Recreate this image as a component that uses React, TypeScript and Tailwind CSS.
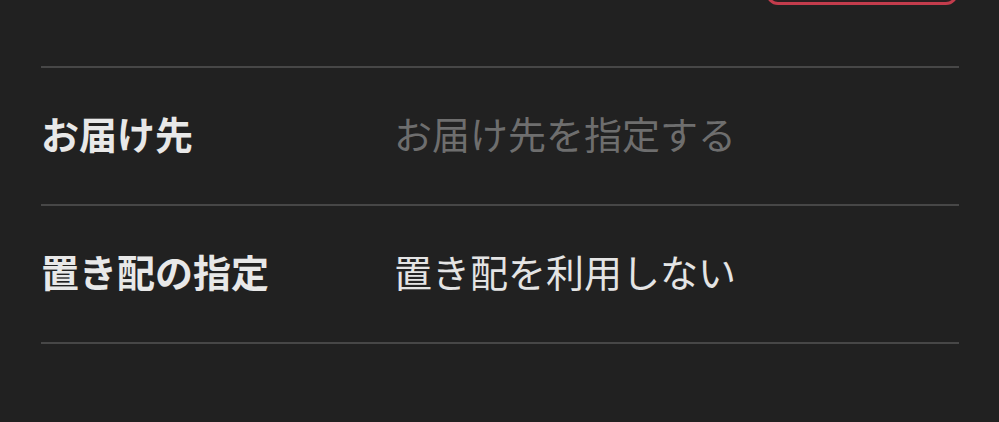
export default function App() {
  const rows = [
    { label: "お届け先", value: "お届け先を指定する", placeholder: true },
    { label: "置き配の指定", value: "置き配を利用しない", placeholder: false },
  ];

  return (
    <div
      className="w-full h-[422px] bg-[#212121] pl-[41px] pr-[40px] overflow-hidden"
      style={{ fontFamily: '"Noto Sans CJK JP", "Noto Sans", sans-serif' }}
    >
      {/* header with action button (cut off at top) */}
      <div className="h-[66px] flex justify-end items-start">
        <button className="mt-[-51px] mr-[1px] w-[192px] h-[56px] rounded-[12px] border-[3px] border-[#c33c4c] bg-[#2b1e21]" />
      </div>

      {rows.map((row) => (
        <div
          key={row.label}
          className="h-[138px] pb-[7px] border-t-2 border-[#474747] flex items-center"
        >
          <div className="w-[353px] shrink-0 text-[38px] font-bold text-[#e8e8e8]">
            {row.label}
          </div>
          <div
            className={
              row.placeholder
                ? "text-[38px] text-[#6e6e6e]"
                : "text-[38px] text-[#e4e4e4]"
            }
          >
            {row.value}
          </div>
        </div>
      ))}
      <div className="border-t-2 border-[#474747]" />
    </div>
  );
}
